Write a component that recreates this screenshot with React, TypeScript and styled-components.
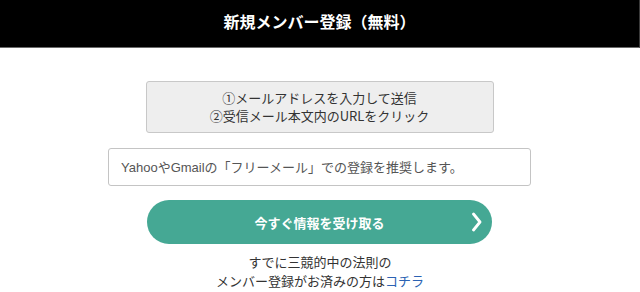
import React from 'react'
import styled, { createGlobalStyle } from 'styled-components'

const GlobalStyle = createGlobalStyle`
  html, body {
    margin: 0;
    padding: 0;
    background: #fff;
  }
  body {
    font-family: "Liberation Sans", "Noto Sans CJK JP", sans-serif;
    color: #333;
  }
`

const steps = ['①メールアドレスを入力して送信', '②受信メール本文内のURLをクリック']

const App = () => (
  <>
    <GlobalStyle />
    <Page>
      <Header>
        <Title>新規メンバー登録（無料）</Title>
      </Header>
      <Content>
        <StepsBox>
          {steps.map((step) => (
            <StepLine key={step}>{step}</StepLine>
          ))}
        </StepsBox>
        <EmailInput type="email" placeholder="YahooやGmailの「フリーメール」での登録を推奨します。" />
        <SubmitButton type="button">
          <span>今すぐ情報を受け取る</span>
          <Chevron width="10" height="20" viewBox="0 0 10 20">
            <path d="M1.5 2 L8 10 L1.5 18" fill="none" stroke="#fff" strokeWidth="2.8" strokeLinecap="round" strokeLinejoin="round" />
          </Chevron>
        </SubmitButton>
        <Note>
          すでに三競的中の法則の<br />
          メンバー登録がお済みの方は<NoteLink href="#">コチラ</NoteLink>
        </Note>
      </Content>
    </Page>
  </>
)

const Page = styled.div`
  width: 640px;
  height: 292px;
  overflow: hidden;
`

const Header = styled.header`
  height: 47px;
  background: #000;
  border-bottom: 1px solid #6a6a6a;
  border-right: 1px solid #3a3a3a;
  display: flex;
  align-items: center;
  justify-content: center;
`

const Title = styled.h1`
  margin: 0;
  padding-bottom: 6px;
  color: #fff;
  font-size: 16px;
  font-weight: bold;
  font-family: "Noto Sans CJK JP", sans-serif;
`

const Content = styled.main`
  display: flex;
  flex-direction: column;
  align-items: center;
  padding-top: 33px;
`

const StepsBox = styled.div`
  box-sizing: border-box;
  width: 348px;
  height: 52px;
  margin-left: -1px;
  padding-bottom: 1px;
  background: #eee;
  border: 1px solid #c8c8c8;
  border-radius: 3px;
  display: flex;
  flex-direction: column;
  justify-content: center;
  align-items: center;
`

const StepLine = styled.div`
  font-size: 13px;
  line-height: 18px;
  color: #333;
  font-family: "Noto Sans CJK JP", sans-serif;
`

const EmailInput = styled.input`
  box-sizing: border-box;
  width: 423px;
  height: 38px;
  margin-top: 15px;
  margin-left: -1px;
  padding: 0 12px;
  border: 1px solid #c4c4c4;
  border-radius: 3px;
  font-size: 13px;
  font-family: "Liberation Sans", "Noto Sans CJK JP", sans-serif;
  outline: none;

  &::placeholder {
    color: #555;
  }
`

const SubmitButton = styled.button`
  position: relative;
  box-sizing: border-box;
  width: 345px;
  height: 44px;
  margin-top: 14px;
  margin-left: -1px;
  border: none;
  border-radius: 22px;
  background: #45a894;
  color: #fff;
  font-size: 13px;
  font-weight: bold;
  font-family: "Noto Sans CJK JP", sans-serif;
  display: flex;
  align-items: center;
  justify-content: center;
  cursor: pointer;
`

const Chevron = styled.svg`
  position: absolute;
  right: 10px;
  top: 12px;
`

const Note = styled.p`
  margin: 8px 0 0;
  text-align: center;
  font-size: 13px;
  line-height: 19px;
  color: #333;
  font-family: "Noto Sans CJK JP", sans-serif;
`

const NoteLink = styled.a`
  color: #2b62b3;
  text-decoration: none;
`

export default App
